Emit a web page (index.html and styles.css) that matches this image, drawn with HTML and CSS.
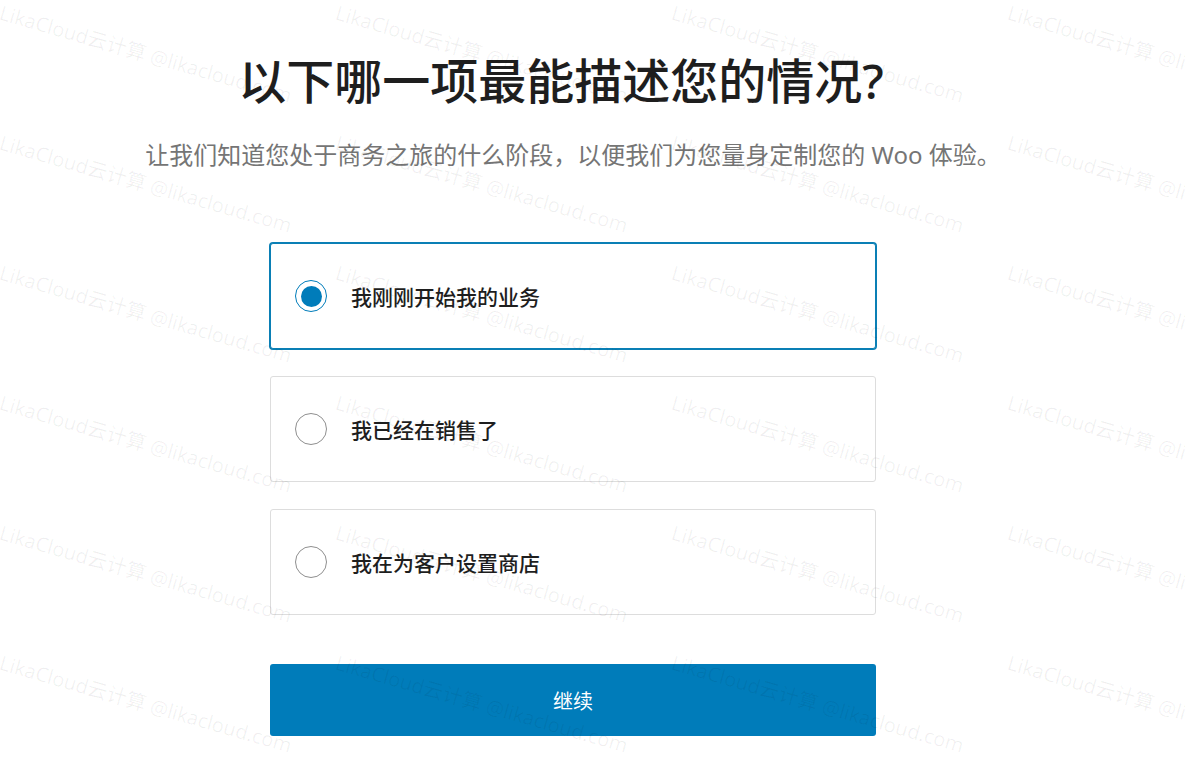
FILE: index.html
```html
<!DOCTYPE html>
<html lang="zh-CN">
<head>
<meta charset="utf-8">
<title>以下哪一项最能描述您的情况?</title>
<link rel="stylesheet" href="styles.css">
</head>
<body>
<main class="page">
  <h1 class="title">以下哪一项最能描述您的情况?</h1>
  <p class="subtitle">让我们知道您处于商务之旅的什么阶段，以便我们为您量身定制您的 Woo 体验。</p>
  <div class="options">
    <label class="option option--selected">
      <span class="radio radio--checked"></span>
      <span class="option-label">我刚刚开始我的业务</span>
    </label>
    <label class="option">
      <span class="radio"></span>
      <span class="option-label">我已经在销售了</span>
    </label>
    <label class="option">
      <span class="radio"></span>
      <span class="option-label">我在为客户设置商店</span>
    </label>
  </div>
  <button class="continue" type="button">继续</button>
</main>
<div class="watermark" aria-hidden="true">
  <span>LikaCloud云计算 @likacloud.com</span><span>LikaCloud云计算 @likacloud.com</span><span>LikaCloud云计算 @likacloud.com</span><span>LikaCloud云计算 @likacloud.com</span>
  <span>LikaCloud云计算 @likacloud.com</span><span>LikaCloud云计算 @likacloud.com</span><span>LikaCloud云计算 @likacloud.com</span><span>LikaCloud云计算 @likacloud.com</span>
  <span>LikaCloud云计算 @likacloud.com</span><span>LikaCloud云计算 @likacloud.com</span><span>LikaCloud云计算 @likacloud.com</span><span>LikaCloud云计算 @likacloud.com</span>
  <span>LikaCloud云计算 @likacloud.com</span><span>LikaCloud云计算 @likacloud.com</span><span>LikaCloud云计算 @likacloud.com</span><span>LikaCloud云计算 @likacloud.com</span>
  <span>LikaCloud云计算 @likacloud.com</span><span>LikaCloud云计算 @likacloud.com</span><span>LikaCloud云计算 @likacloud.com</span><span>LikaCloud云计算 @likacloud.com</span>
  <span>LikaCloud云计算 @likacloud.com</span><span>LikaCloud云计算 @likacloud.com</span><span>LikaCloud云计算 @likacloud.com</span><span>LikaCloud云计算 @likacloud.com</span>
</div>
</body>
</html>
```

FILE: styles.css
```css
html, body {
  margin: 0;
  padding: 0;
  background: #ffffff;
}

body {
  font-family: "Noto Sans", "Noto Sans CJK SC", sans-serif;
  color: #1e1e1e;
  width: 1185px;
  height: 778px;
  overflow: hidden;
  position: relative;
}

.page {
  width: 1146px;
  display: flex;
  flex-direction: column;
  align-items: center;
}

.title {
  margin: 0 24px 0 0;
  padding-top: 51px;
  font-size: 48px;
  line-height: 60px;
  font-weight: 500;
  color: #1e1e1e;
}

.subtitle {
  margin: 28px 0 0;
  font-size: 24px;
  line-height: 32px;
  font-weight: 400;
  color: #757575;
}

.options {
  margin-top: 72px;
  width: 606px;
  display: flex;
  flex-direction: column;
  gap: 27px;
}

.option {
  box-sizing: border-box;
  height: 106px;
  border: 1px solid #dddddd;
  border-radius: 3px;
  display: flex;
  align-items: center;
  padding-left: 24px;
  background: #ffffff;
}

.option--selected {
  border-color: #0a7fb5;
  box-shadow: 0 0 0 1px #0a7fb5;
}

.radio {
  box-sizing: border-box;
  width: 32px;
  height: 32px;
  border-radius: 50%;
  border: 1px solid #8f8f8f;
  background: #ffffff;
  flex: none;
  display: flex;
  align-items: center;
  justify-content: center;
}

.radio--checked {
  border: 1.5px solid #007cba;
}

.radio--checked::after {
  content: "";
  width: 21px;
  height: 21px;
  border-radius: 50%;
  background: #007cba;
}

.option-label {
  margin-left: 24px;
  font-size: 21px;
  font-weight: 500;
  color: #1e1e1e;
}

.continue {
  margin-top: 49px;
  width: 606px;
  height: 72px;
  border: none;
  border-radius: 3px;
  background: #007cba;
  color: #ffffff;
  font-family: "Noto Sans", "Noto Sans CJK SC", sans-serif;
  font-size: 20px;
  font-weight: 400;
  cursor: pointer;
}

.watermark {
  position: absolute;
  inset: 0;
  overflow: hidden;
  pointer-events: none;
  display: grid;
  grid-template-columns: repeat(4, 336px);
  grid-auto-rows: 130px;
  padding: 3px 0 0 3px;
}

.watermark span {
  display: block;
  white-space: nowrap;
  font-family: "Open Sans", "Noto Sans CJK SC", sans-serif;
  font-size: 20px;
  line-height: 20px;
  color: rgba(0, 0, 0, 0.06);
  transform: rotate(16deg);
  transform-origin: 0 0;
}
```
